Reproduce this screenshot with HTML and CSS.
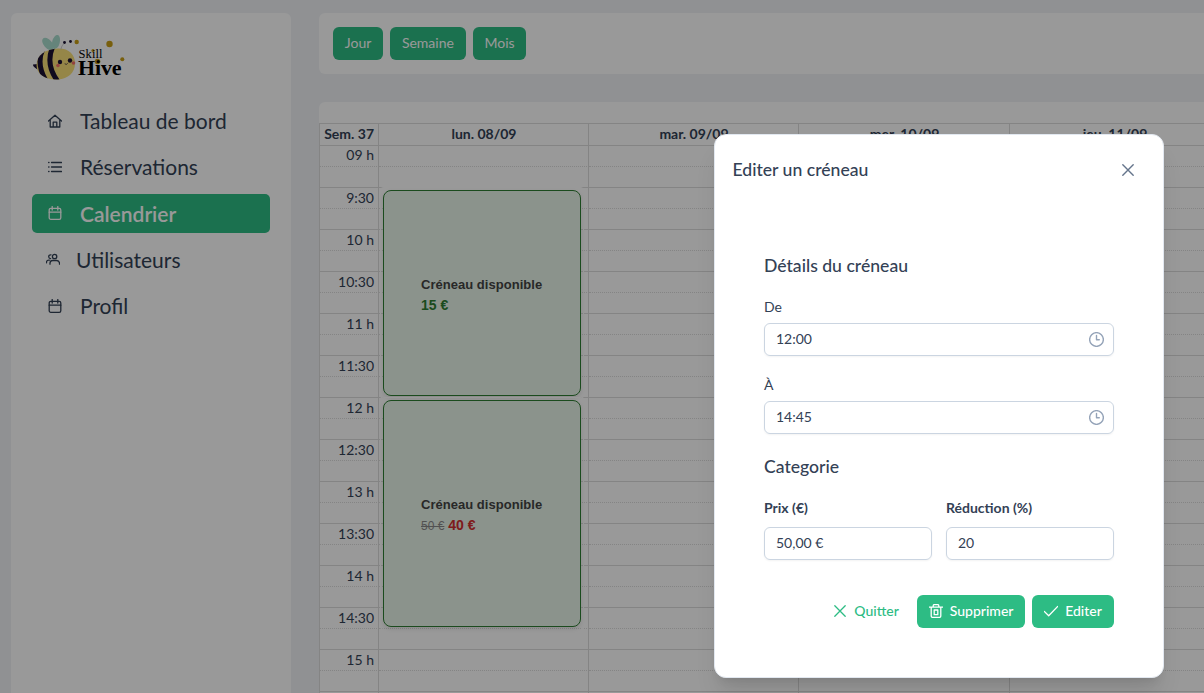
FILE: index.html
```html
<!DOCTYPE html>
<html lang="fr">
<head>
<meta charset="utf-8">
<title>Skill Hive</title>
<link rel="stylesheet" href="styles.css">
</head>
<body>
<svg class="defs" width="0" height="0">
  <symbol id="calendar" viewBox="0 0 14 14"><rect x="1.2" y="2.3" width="11.6" height="11" rx="1.6"/><path d="M1.2 6.2H12.8M4.2.5V4M9.8.5V4"/></symbol>
  <symbol id="times" viewBox="0 0 14 14"><path d="M1.8 1.8 12.2 12.2M12.2 1.8 1.8 12.2"/></symbol>
  <symbol id="clock" viewBox="0 0 14 14"><circle cx="7" cy="7" r="6.4"/><path d="M7 3.2V7.2H9.6"/></symbol>
</svg>
<div class="app">
  <aside class="sidebar">
    <div class="logo">
      <svg width="96" height="50" viewBox="0 0 96 50">
        <g fill="#a9dccd"><ellipse cx="16" cy="13" rx="4.2" ry="7.4" transform="rotate(-42 16 13)"/><ellipse cx="24" cy="11" rx="3.8" ry="7.2" transform="rotate(14 24 11)"/></g>
        <path d="M6 33 1 33.500q-.5 2 4.500 5z" fill="#1c1233"/>
        <clipPath id="body"><path d="M4.500 34C4.500 24 14 18 26 17.500c11-.3 17 6 17 15S36 48 26 48.500C13 49 4.500 43 4.500 34z"/></clipPath>
        <g clip-path="url(#body)"><path fill="#f8df78" d="M0 10h50v40H0z"/><path d="M11 18q-7 14 2.500 31M21 15q-8 18 4.500 35" fill="none" stroke="#1c1233" stroke-width="5"/></g>
        <path d="M29 18Q30 13 33 12" fill="none" stroke="#bbb" stroke-width=".7"/>
        <g fill="#1c1233"><circle cx="28" cy="31" r="2.200"/><circle cx="38" cy="29.500" r="2.200"/><circle cx="32.500" cy="11.500" r="1.400"/><circle cx="38.500" cy="10.500" r="1.400"/></g>
        <g fill="#f4716b"><circle cx="26" cy="34.500" r="1.800"/><circle cx="41.500" cy="32" r="1.800"/></g>
        <path d="M33 33q1.500 1.200 2.500-.3" fill="none" stroke="#1c1233" stroke-width=".7"/>
        <g fill="#c89e16"><circle cx="44.700" cy="11" r="2.200"/><circle cx="77.500" cy="13" r="3.200"/><circle cx="61" cy="19.500" r="1.600"/><circle cx="65.500" cy="30.500" r="2.800"/><circle cx="90.300" cy="28.300" r="2"/></g>
        <text x="46.500" y="26.500" class="logo-small" textLength="24">Skill</text>
        <text x="46" y="44" class="logo-big" textLength="43.500">Hive</text>
      </svg>
    </div>
    <nav class="menu">
      <a class="item"><svg class="icon" viewBox="0 0 14 14"><path d="M.5 7 7 1.200 13.500 7M2.200 6V13H11.800V6M5.200 13V8.200H8.800V13"/></svg>Tableau de bord</a>
      <a class="item"><svg class="icon" viewBox="0 0 14 14"><path d="M3.500 2.500H13.500M3.500 7H13.500M3.500 11.500H13.500M.6 2.500H1M.6 7H1M.6 11.500H1"/></svg>Réservations</a>
      <a class="item active"><svg class="icon up"><use href="#calendar"/></svg>Calendrier</a>
      <a class="item users"><svg class="icon up" viewBox="0 0 14 14"><circle cx="8.600" cy="4.500" r="2.200"/><path d="M4 12.200V11q.2-2.500 2.600-2.500h4q2.600.1 2.900 2.500v1.200M5 2.800Q2.700 2.600 2.700 4.700 2.800 6.500 4.600 6.600M.5 10.800V10Q.7 8.200 2.800 8.200H3.400"/></svg>Utilisateurs</a>
      <a class="item"><svg class="icon"><use href="#calendar"/></svg>Profil</a>
    </nav>
  </aside>
  <main class="main">
    <div class="toolbar"><button class="btn">Jour</button><button class="btn">Semaine</button><button class="btn">Mois</button></div>
    <section class="calendar">
      <div class="row head"><b class="time">Sem. 37</b><b>lun. 08/09</b><b>mar. 09/09</b><b>mer. 10/09</b><b>jeu. 11/09</b></div>
      <div class="slots">
        <div class="row"><span class="time">09 h</span><i></i><i></i><i></i><i></i></div>
        <div class="row"><span class="time"></span><i></i><i></i><i></i><i></i></div>
        <div class="row"><span class="time">9:30</span><i></i><i></i><i></i><i></i></div>
        <div class="row"><span class="time"></span><i></i><i></i><i></i><i></i></div>
        <div class="row"><span class="time">10 h</span><i></i><i></i><i></i><i></i></div>
        <div class="row"><span class="time"></span><i></i><i></i><i></i><i></i></div>
        <div class="row"><span class="time">10:30</span><i></i><i></i><i></i><i></i></div>
        <div class="row"><span class="time"></span><i></i><i></i><i></i><i></i></div>
        <div class="row"><span class="time">11 h</span><i></i><i></i><i></i><i></i></div>
        <div class="row"><span class="time"></span><i></i><i></i><i></i><i></i></div>
        <div class="row"><span class="time">11:30</span><i></i><i></i><i></i><i></i></div>
        <div class="row"><span class="time"></span><i></i><i></i><i></i><i></i></div>
        <div class="row"><span class="time">12 h</span><i></i><i></i><i></i><i></i></div>
        <div class="row"><span class="time"></span><i></i><i></i><i></i><i></i></div>
        <div class="row"><span class="time">12:30</span><i></i><i></i><i></i><i></i></div>
        <div class="row"><span class="time"></span><i></i><i></i><i></i><i></i></div>
        <div class="row"><span class="time">13 h</span><i></i><i></i><i></i><i></i></div>
        <div class="row"><span class="time"></span><i></i><i></i><i></i><i></i></div>
        <div class="row"><span class="time">13:30</span><i></i><i></i><i></i><i></i></div>
        <div class="row"><span class="time"></span><i></i><i></i><i></i><i></i></div>
        <div class="row"><span class="time">14 h</span><i></i><i></i><i></i><i></i></div>
        <div class="row"><span class="time"></span><i></i><i></i><i></i><i></i></div>
        <div class="row"><span class="time">14:30</span><i></i><i></i><i></i><i></i></div>
        <div class="row"><span class="time"></span><i></i><i></i><i></i><i></i></div>
        <div class="row"><span class="time">15 h</span><i></i><i></i><i></i><i></i></div>
        <div class="row"><span class="time"></span><i></i><i></i><i></i><i></i></div>
        <div class="row"><span class="time"></span><i></i><i></i><i></i><i></i></div>
        <div class="slot-event first"><div class="event"><div><div class="event-title">Créneau disponible</div><div class="price">15 €</div></div></div></div>
        <div class="slot-event second"><div class="event"><div><div class="event-title">Créneau disponible</div><div class="price promo"><s>50 €</s> 40 €</div></div></div></div>
      </div>
    </section>
  </main>
</div>
<div class="mask">
  <div class="dialog">
    <header class="dialog-head"><span>Editer un créneau</span><svg class="close"><use href="#times"/></svg></header>
    <div class="form">
      <h2>Détails du créneau</h2>
      <label>De</label>
      <div class="input">12:00<svg class="clock"><use href="#clock"/></svg></div>
      <label class="to">À</label>
      <div class="input">14:45<svg class="clock"><use href="#clock"/></svg></div>
      <h2 class="category">Categorie</h2>
      <div class="pair">
        <div><label class="strong">Prix (€)</label><div class="input">50,00 €</div></div>
        <div><label class="strong">Réduction (%)</label><div class="input">20</div></div>
      </div>
      <div class="actions">
        <button class="btn text"><svg><use href="#times"/></svg>Quitter</button>
        <button class="btn"><svg viewBox="0 0 14 14"><path d="M.3 3.200H13.700M2.200 3.200V12Q2.200 13.400 3.500 13.400H10.500Q11.800 13.400 11.800 12V3.200M4.200 3V1.700Q4.300.6 5.400.6H8.600Q9.700.6 9.800 1.700V3M5.200 6V10.700H8.800V6z"/></svg>Supprimer</button>
        <button class="btn edit"><svg viewBox="0 0 14 14"><path d="M.3 7.500 4.700 11.800 13.700 2.500"/></svg>Editer</button>
      </div>
    </div>
  </div>
</div>
</body>
</html>
```
FILE: styles.css
```css
* { box-sizing: border-box; }
body { margin: 0; height: 693px; overflow: hidden; background: #f0f2f6; color: #334155; font: 14px/20px Lato, sans-serif; }
svg { fill: none; stroke: currentColor; stroke-width: 1.3; stroke-linecap: round; stroke-linejoin: round; flex: none; }
.defs { position: absolute; }
.app { display: flex; gap: 28px; height: 693px; padding: 13px 0 0 11px; overflow: hidden; }

.sidebar { flex: none; width: 280px; background: #fff; border-radius: 6px 6px 0 0; padding: 18px 21px; }
.logo { height: 70px; }
.logo svg { display: block; stroke: none; }
.logo text { fill: #000; font-family: "Liberation Serif", serif; }
.logo-small { font-size: 12.500px; }
.logo-big { font-size: 22px; font-weight: 700; }
.menu { display: flex; flex-direction: column; gap: 7.250px; }
.item { display: flex; align-items: center; gap: 18px; height: 39px; padding-left: 16px; border-radius: 5px; font-size: 21px; line-height: 39px; }
.item.active { background: #2dbc84; color: #fff; font-weight: 600; }
.item.users { padding-left: 14px; gap: 16px; }
.icon { width: 14px; height: 14px; }
.icon.up { margin-top: -1px; }

.main { flex: none; width: 900px; display: flex; flex-direction: column; gap: 28px; }
.toolbar { flex: none; height: 61px; background: #fff; border-radius: 6px; padding: 14px; display: flex; gap: 7px; }
.btn { display: flex; align-items: center; justify-content: center; gap: 7px; height: 33px; padding: 0 11.500px 2px; border: 0; border-radius: 6px; background: #2dbc84; color: #fff; font: 500 14px/20px Lato, sans-serif; white-space: nowrap; }
.btn svg { width: 14px; height: 14px; margin-top: 1px; }
.btn.text { background: none; color: #2dbc84; }
.btn.edit { width: 82px; }
.toolbar .btn { font-weight: 400; padding: 0 11.800px 1px; }

.calendar { background: #fff; border-radius: 6px 6px 0 0; padding-top: 21px; }
.row { display: grid; grid-template-columns: 60px 210px 210px 211px 210px; height: 21px; }
.row > * { border-right: 1px solid #ddd; border-bottom: 1px dotted #ddd; }
.row > .time { border-left: 1px solid #ddd; padding-right: 4px; text-align: right; line-height: 19px; white-space: nowrap; }
.slots .row:first-child > .time { line-height: 18px; }
.slots .row:nth-child(even) > *, .head > * { border-bottom-style: solid; }
.row.head { height: 23px; border-top: 1px solid #ddd; text-align: center; }
.head > b { font-weight: 700; line-height: 20px; padding-left: 1px; }
.row.head > .time { line-height: 20px; }
.slots { position: relative; }
.slot-event { position: absolute; left: 62px; width: 202px; padding: 2px; border-radius: 3px; box-shadow: 0 0 0 1px #fff; }
.slot-event.first { top: 42px; height: 210px; }
.slot-event.second { top: 252px; height: 231px; }
.event { height: 100%; display: flex; align-items: center; padding: 3px 0 0 37px; background: #e8f5e9; border: 1px solid #2e7d32; border-radius: 8px; box-shadow: 0 2px 4px rgba(0,0,0,.1); font: 700 14px/20px "Liberation Sans", sans-serif; }
.event-title { color: #444; font-size: 13px; letter-spacing: .03px; }
.price { color: #2e7d32; }
.promo { color: #d32f2f; }
.promo s { color: #888; font-size: 12px; font-weight: 400; }

.mask { position: absolute; inset: 0; background: rgba(0,0,0,.4); overflow: hidden; padding: 134px 0 0 714px; }
.dialog { width: 450px; height: 544px; background: #fff; border: 1px solid #e2e8f0; border-radius: 12px; box-shadow: 0 20px 25px -5px rgba(0,0,0,.1), 0 8px 10px -6px rgba(0,0,0,.1); }
.dialog-head { display: flex; align-items: center; justify-content: space-between; height: 70px; padding: 0 28px 0 17.500px; font-size: 17.600px; font-weight: 500; }
.close { width: 14px; height: 14px; color: #64748b; stroke-width: 1.4; }
.form { padding: 49px 49px 0; }
h2 { margin: 0 0 19px; font-size: 17.600px; line-height: 24px; font-weight: 500; }
label { display: block; margin-bottom: 6px; }
.to { margin-top: 19px; margin-bottom: 6px; }
.input { display: flex; align-items: center; justify-content: space-between; height: 33px; padding: 0 9px 2px 11px; border: 1px solid #cbd5e1; border-radius: 6px; box-shadow: 0 1px 2px rgba(18,18,23,.05); }
.clock { width: 15px; height: 15px; margin-top: 1px; color: #94a3b8; }
h2.category { margin: 21px 0 19px; }
.strong { font-weight: 700; margin-bottom: 9px; }
.pair { display: grid; grid-template-columns: 1fr 1fr; gap: 14px; }
.actions { display: flex; justify-content: flex-end; gap: 7px; margin-top: 35px; }
```
